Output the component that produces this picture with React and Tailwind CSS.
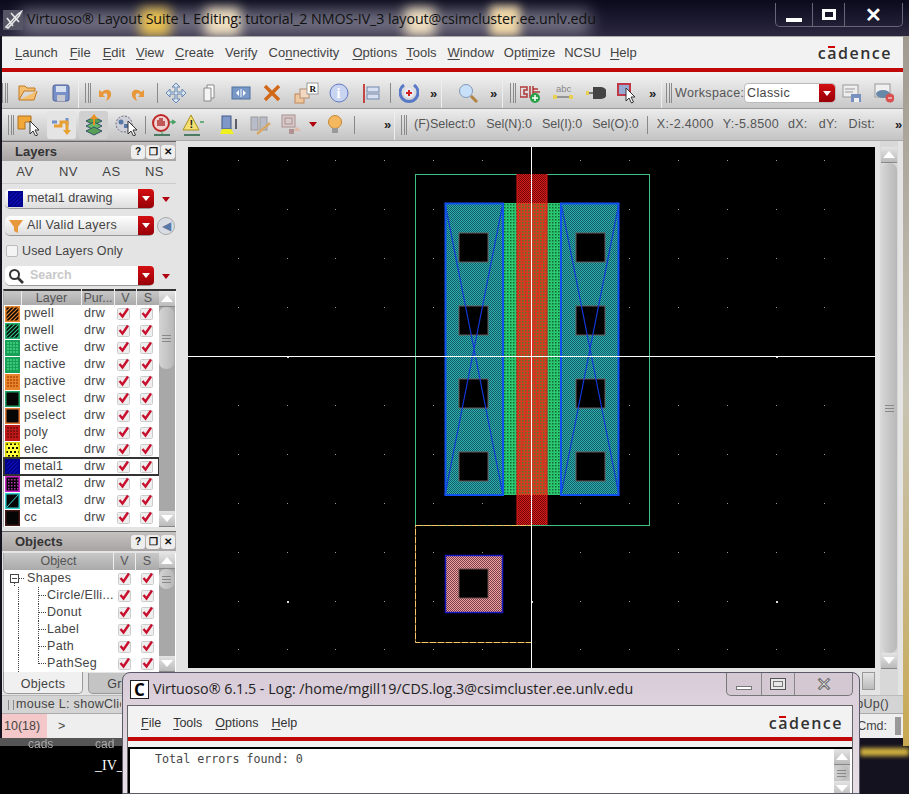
import React from 'react';

const LAYERS = [
  ['pwell', 'hatchOrange'], ['nwell', 'hatchGreen'], ['active', 'dotGreen'], ['nactive', 'dotGreen'],
  ['pactive', 'dotOrange'], ['nselect', 'boxGreen'], ['pselect', 'boxOrange'], ['poly', 'dotRed'],
  ['elec', 'dotYellow'], ['metal1', 'hatchBlue'], ['metal2', 'dotPurple'], ['metal3', 'slashCyan'], ['cc', 'boxDark'],
];
const SWATCH = {
  hatchOrange: ['#e8842c', 'hatch', '#e8842c'], hatchGreen: ['#22b070', 'hatch', '#30c080'],
  dotGreen: ['#18a058', 'check', '#38c878'], dotOrange: ['#e8842c', 'check', '#c05810'],
  boxGreen: ['#1fa060', null], boxOrange: ['#e07838', null], dotRed: ['#c01818', 'check', '#801010'],
  dotYellow: ['#d8d800', 'checkBig', '#ffff40'], hatchBlue: ['#000090', 'hatch', '#1010c0'],
  dotPurple: ['#c828c8', 'checkDark', '#a020a0'], slashCyan: ['#30d0d0', 'slash', '#30d0d0'], boxDark: ['#401818', null],
};

function Swatch({ kind }) {
  const [edge, type, ink] = SWATCH[kind];
  const fill = type === 'check' ? edge : kind === 'dotYellow' ? '#ffff40' : kind === 'hatchBlue' ? '#000080' : '#050505';
  return (
    <svg width="15" height="16" viewBox="0 0 15 16" className="shrink-0">
      <clipPath id={`clip-${kind}`}><rect x="1" y="1" width="13" height="14" /></clipPath>
      <rect x="0.75" y="0.75" width="13.5" height="14.5" fill={fill} />
      <g clipPath={`url(#clip-${kind})`}>
        {type === 'hatch' && [0, 4, 8, 12, 16, 20, 24].map((n) => (
          <line key={n} x1={n - 8} y1="15" x2={n + 6} y2="1" stroke={ink} strokeWidth="1.200" />
        ))}
        {type === 'slash' && <line x1="2" y1="14" x2="13" y2="2" stroke={ink} />}
        {type === 'check' && [2, 5, 8, 11].map((a) => [2, 5, 8, 11].map((b) => (
          <rect key={`${a}${b}`} x={a} y={b} width="2" height="2" fill={ink} />
        )))}
        {type === 'checkBig' && [1, 5, 9, 13].map((a) => [1, 5, 9, 13].map((b) => (
          <rect key={`${a}${b}`} x={a + ((b - 1) % 8 === 0 ? 0 : 2)} y={b} width="2" height="2" fill="#101000" />
        )))}
        {type === 'checkDark' && [3, 6, 9, 12].map((a) => [3, 6, 9, 12].map((b) => (
          <rect key={`${a}${b}`} x={a} y={b} width="1.500" height="1.500" fill="#b030b0" />
        )))}
      </g>
      <rect x="0.75" y="0.75" width="13.5" height="14.5" fill="none" stroke={edge} strokeWidth="1.500" />
    </svg>
  );
}

function Check() {
  return (
    <svg width="13" height="13" viewBox="0 0 13 13" className="shrink-0">
      <rect x="0.5" y="1.5" width="12" height="11" rx="1" fill="#eee" stroke="#ccc" />
      <path d="M2.5 6l3 3.5 5.5-8" fill="none" stroke="#c8102e" strokeWidth="2.4" />
    </svg>
  );
}

function Caret({ className = 'border-t-[#b00010]' }) {
  return <span className={`block w-0 h-0 border-x-[4px] border-x-transparent border-t-[5px] ${className}`} />;
}

function RedDrop() {
  return (
    <span className="w-[16px] self-stretch bg-gradient-to-b from-[#d40f12] to-[#980008] rounded-r-[4px] flex items-center justify-center">
      <Caret className="border-t-white" />
    </span>
  );
}

function Grip() {
  return (
    <span className="w-[6px] h-[20px] shrink-0 flex justify-between">
      <span className="w-px h-full bg-[#8a8a8a]" />
      <span className="w-px h-full bg-[#8a8a8a]" />
      <span className="w-px h-full bg-[#8a8a8a]" />
    </span>
  );
}

function More({ className = '' }) {
  return <span className={`w-[10px] shrink-0 text-[13px] leading-none font-bold text-[#222] ${className}`}>»</span>;
}

function Arrow({ x = 0, y = 0 }) {
  return <path transform={`translate(${x} ${y})`} d="M0 0v13l3-3 2.500 5 2-1-2.500-5h4z" fill="#fff" stroke="#333" strokeWidth="1" />;
}

function Ic({ children, w = 20, className = '' }) {
  return (
    <svg width={w} height="22" viewBox={`0 0 ${w} 22`} className={`shrink-0 ${className}`}>
      {children}
    </svg>
  );
}

function Logo({ className = '' }) {
  return (
    <span className={`font-['Open_Sans',sans-serif] font-semibold text-[16px] leading-none tracking-[1.5px] text-[#333] flex ${className}`}>
      c<span className="relative">a<span className="absolute left-[1px] top-[1px] w-[7px] h-[2px] bg-[#c00]" /></span>dence
    </span>
  );
}

function U({ children }) {
  return <span className="underline underline-offset-2 decoration-1">{children}</span>;
}

function DockHeader({ title }) {
  return (
    <div className="h-[20px] w-[174px] shrink-0 flex items-center bg-gradient-to-b from-[#c6c2c2] to-[#a8a4a4] border-t border-[#666]">
      <span className="ml-[13px] font-bold text-[13px] text-[#333] flex-1">{title}</span>
      {['?', '❐', '✕'].map((g) => (
        <span key={g} className="w-[14px] h-[14px] mr-[1px] rounded-[3px] bg-[#eee] text-[10px] font-bold text-[#111] flex items-center justify-center">{g}</span>
      ))}
    </div>
  );
}

function ScrollBtn({ up }) {
  return (
    <span className="h-[16px] w-[16px] shrink-0 bg-gradient-to-b from-[#e4e4e4] to-[#bbb] border-b border-[#888] flex items-center justify-center">
      <span className={`w-0 h-0 border-x-[6px] border-x-transparent ${up ? 'border-b-[7px] border-b-white' : 'border-t-[7px] border-t-white'}`} />
    </span>
  );
}

function Thumb({ className }) {
  return (
    <span className={`w-[15px] bg-gradient-to-r from-[#d4d4d4] to-[#b8b8b8] rounded-[7px] flex flex-col items-center justify-center gap-[2px] shrink-0 ${className}`}>
      <span className="w-[9px] h-px bg-[#888]" />
      <span className="w-[9px] h-px bg-[#888]" />
      <span className="w-[9px] h-px bg-[#888]" />
    </span>
  );
}

function Canvas() {
  const pitch = 48.9;
  const dots = [];
  for (let i = -7; i <= 7; i++) {
    for (let j = -4; j <= 6; j++) {
      const x = 531 + i * pitch;
      const y = 356 + j * pitch;
      if (x < 190 || x > 873 || y < 149 || y > 666) continue;
      dots.push(<rect key={`${i}_${j}`} x={Math.round(x)} y={Math.round(y)} width={i % 5 === 0 && j % 5 === 0 ? 2 : 1} height={i % 5 === 0 && j % 5 === 0 ? 2 : 1} fill={i % 5 === 0 && j % 5 === 0 ? '#ddd' : '#999'} />);
    }
  }
  const contacts = [233, 306, 379, 452];
  return (
    <svg width="687" height="521" viewBox="188 147 687 521" className="block bg-black">
      <defs>
        <pattern id="teal" width="2" height="2" patternUnits="userSpaceOnUse">
          <rect width="2" height="2" fill="#2cb0a8" /><rect width="1" height="1" fill="#125a6c" /><rect x="1" y="1" width="1" height="1" fill="#125a6c" />
        </pattern>
        <pattern id="green" width="3" height="3" patternUnits="userSpaceOnUse">
          <rect width="3" height="3" fill="#2cc870" /><rect width="1.500" height="1.500" fill="#0e6a3a" />
        </pattern>
        <pattern id="red" width="2" height="2" patternUnits="userSpaceOnUse">
          <rect width="2" height="2" fill="#d81c1c" /><rect width="1" height="1" fill="#700808" /><rect x="1" y="1" width="1" height="1" fill="#700808" />
        </pattern>
        <pattern id="redGreen" width="3" height="3" patternUnits="userSpaceOnUse">
          <rect width="3" height="3" fill="#d83a20" /><rect width="1.500" height="1.500" fill="#4d7a30" />
        </pattern>
        <pattern id="pink" width="2" height="2" patternUnits="userSpaceOnUse">
          <rect width="2" height="2" fill="#f0a0a0" /><rect width="1" height="1" fill="#784048" /><rect x="1" y="1" width="1" height="1" fill="#784048" />
        </pattern>
      </defs>
      {dots}
      <rect x="415.500" y="174.500" width="234" height="351" fill="none" stroke="#3fc080" />
      <rect x="445" y="203" width="58" height="292" fill="url(#teal)" />
      <rect x="561" y="203" width="58" height="292" fill="url(#teal)" />
      <rect x="503" y="203" width="58" height="292" fill="url(#green)" />
      <rect x="517" y="174" width="30" height="29" fill="url(#red)" />
      <rect x="517" y="495" width="30" height="30" fill="url(#red)" />
      <rect x="517" y="203" width="30" height="292" fill="url(#redGreen)" />
      <path d="M517 174v351M547 174v351" stroke="#e01818" strokeWidth="1" />
      <path d="M517 203l30 292M547 203l-30 292" stroke="#f02020" strokeWidth="1" opacity="0.7" />
      {contacts.map((y) => (
        <g key={y}>
          <rect x="459" y={y} width="29" height="29" fill="#000" stroke="#6a5a5a" />
          <rect x="576" y={y} width="29" height="29" fill="#000" stroke="#6a5a5a" />
        </g>
      ))}
      <path d="M445 203l58 292M503 203l-58 292M561 203l58 292M619 203l-58 292" stroke="#1238d8" strokeWidth="1.200" fill="none" />
      <rect x="445.500" y="203.500" width="57.500" height="291.500" fill="none" stroke="#1050f0" strokeWidth="2" />
      <rect x="561" y="203.500" width="57.500" height="291.500" fill="none" stroke="#1050f0" strokeWidth="2" />
      <rect x="415.500" y="525.500" width="116" height="117" fill="none" stroke="#f8c868" strokeDasharray="7 1" />
      <rect x="445.500" y="555.500" width="57" height="57" fill="url(#pink)" stroke="#1818c0" strokeWidth="1.500" />
      <rect x="459" y="569" width="29" height="29" fill="#000" stroke="#6a4a4a" />
      <path d="M188 356.500h687M531.500 147v521" stroke="#fff" strokeWidth="1" />
    </svg>
  );
}

function LayersPanel() {
  return (
    <>
      <DockHeader title="Layers" />
      <div className="h-[23px] w-[174px] shrink-0 flex items-center pl-[1px] border-b border-[#ccc] text-[13px] text-[#444] tracking-[0.5px]">
        <span className="w-[44px] text-center">AV</span>
        <span className="w-[43px] text-center">NV</span>
        <span className="w-[43px] text-center">AS</span>
        <span className="w-[43px] text-center">NS</span>
      </div>
      <div className="mt-[5px] h-[20px] flex items-center">
        <div className="ml-[3px] w-[149px] h-full flex items-center bg-gradient-to-b from-white to-[#ddd] rounded-[5px] border-b border-[#999]">
          <span className="ml-[3px]"><Swatch kind="hatchBlue" /></span>
          <span className="ml-[4px] flex-1 text-[12.5px] tracking-[0.05px] text-[#444]">metal1 drawing</span>
          <RedDrop />
        </div>
        <span className="ml-[8px]"><Caret /></span>
      </div>
      <div className="mt-[7px] h-[20px] flex items-center">
        <div className="ml-[3px] w-[149px] h-full flex items-center bg-gradient-to-b from-white to-[#ddd] rounded-[5px] border-b border-[#999]">
          <svg width="16" height="16" viewBox="0 0 16 16" className="ml-[3px]"><path d="M1 2h14l-5 7v6l-4-2V9z" fill="#e8983c" /></svg>
          <span className="ml-[3px] flex-1 text-[12.5px] tracking-[0.3px] text-[#444]">All Valid Layers</span>
          <RedDrop />
        </div>
        <span className="ml-[3px] w-[18px] h-[18px] rounded-full bg-[#d8dce4] border border-[#aaa] flex items-center justify-center text-[12px] leading-none text-[#5878a8]">◀</span>
      </div>
      <div className="mt-[6px] h-[18px] flex items-center">
        <span className="ml-[4px] w-[12px] h-[12px] bg-[#f4f4f4] border border-[#bbb] rounded-[2px]" />
        <span className="ml-[4px] text-[12.5px] tracking-[0.1px] text-[#444]">Used Layers Only</span>
      </div>
      <div className="mt-[6px] h-[20px] flex items-center">
        <div className="ml-[3px] w-[149px] h-full flex items-center bg-white rounded-[5px] border-b border-[#999]">
          <svg width="16" height="16" viewBox="0 0 16 16" className="ml-[3px]" fill="none" stroke="#333" strokeWidth="2"><circle cx="6.500" cy="6.500" r="4.500" /><path d="M10 10l5 5" strokeWidth="2.600" /></svg>
          <span className="ml-[6px] flex-1 text-[12.5px] font-bold text-[#c8c8c8]">Search</span>
          <RedDrop />
        </div>
        <span className="ml-[8px]"><Caret /></span>
      </div>
      <div className="mt-[3px] h-[238px] w-[173px] ml-[1px] flex border-t-2 border-[#333] border-l border-l-[#aaa] bg-white">
        <div className="w-[155px] flex flex-col">
          <div className="h-[14px] shrink-0 flex items-center text-[12.5px] text-[#555] bg-gradient-to-b from-[#c8c8c8] to-[#aaa]">
            <span className="w-[18px] border-r border-[#eee] h-full" />
            <span className="w-[60px] text-center border-r border-[#eee]">Layer</span>
            <span className="w-[33px] text-center border-r border-[#eee] truncate">Pur...</span>
            <span className="w-[22px] text-center border-r border-[#eee]">V</span>
            <span className="w-[22px] text-center">S</span>
          </div>
          {LAYERS.map(([name, kind]) => (
            <div key={name} className={`h-[17px] shrink-0 flex items-center text-[12.500px] text-[#444] tracking-[0.3px] ${name === 'metal1' ? 'outline-2 -outline-offset-1 outline-[#333]' : ''}`}>
              <span className="ml-[1px]"><Swatch kind={kind} /></span>
              <span className="ml-[4px] w-[60px]">{name}</span>
              <span className="w-[33px]">drw</span>
              <Check />
              <span className="ml-[10px]"><Check /></span>
            </div>
          ))}
        </div>
        <div className="w-[16px] flex flex-col bg-[#a8a8a8]">
          <ScrollBtn up />
          <Thumb className="h-[62px]" />
          <span className="flex-1" />
          <ScrollBtn />
        </div>
      </div>
    </>
  );
}

function TreeGuide({ last }) {
  return (
    <svg width="43" height="17" viewBox="0 0 43 17" className="shrink-0">
      <path d="M14.500 0v17" stroke="#444" strokeDasharray="1 1" />
      <path d={last ? 'M34.500 0v9M35 8.500h7' : 'M34.500 0v17M35 8.500h7'} stroke="#444" strokeDasharray="1 1" />
    </svg>
  );
}

function ObjectsPanel() {
  const kids = ['Circle/Elli...', 'Donut', 'Label', 'Path', 'PathSeg'];
  return (
    <>
      <div className="mt-[4px]"><DockHeader title="Objects" /></div>
      <div className="mt-[2px] h-[119px] w-[173px] ml-[1px] flex border-l border-[#aaa] bg-white overflow-hidden">
        <div className="w-[155px] flex flex-col">
          <div className="h-[17px] shrink-0 flex items-center text-[12.500px] text-[#555] bg-gradient-to-b from-[#c8c8c8] to-[#aaa]">
            <span className="w-[110px] text-center border-r border-[#eee]">Object</span>
            <span className="w-[22px] text-center border-r border-[#eee]">V</span>
            <span className="w-[22px] text-center">S</span>
          </div>
          <div className="h-[17px] shrink-0 flex items-center text-[12.500px] text-[#444] tracking-[0.3px]">
            <svg width="23" height="17" viewBox="0 0 23 17" className="shrink-0">
              <rect x="6.500" y="4.500" width="8" height="8" fill="#fff" stroke="#444" />
              <path d="M8 8.500h5" stroke="#444" />
              <path d="M15 8.500h6M10.500 13v4" stroke="#444" strokeDasharray="1 1" />
            </svg>
            <span className="w-[91px]">Shapes</span>
            <Check />
            <span className="ml-[10px]"><Check /></span>
          </div>
          {kids.map((k, i) => (
            <div key={k} className="h-[17px] shrink-0 flex items-center text-[12.500px] text-[#444] tracking-[0.3px]">
              <TreeGuide last={i === 4} />
              <span className="w-[71px] truncate">{k}</span>
              <Check />
              <span className="ml-[10px]"><Check /></span>
            </div>
          ))}
        </div>
        <div className="w-[16px] flex flex-col bg-[#a8a8a8]">
          <ScrollBtn up />
          <Thumb className="h-[20px]" />
          <span className="flex-1" />
          <ScrollBtn />
        </div>
      </div>
      <div className="h-[22px] flex items-end text-[12.500px] text-[#444] tracking-[0.3px]">
        <span className="ml-[1px] w-[80px] h-full pt-[3px] bg-[#f0f0f0] border border-t-0 border-[#999] rounded-b-[5px] flex items-center justify-center">Objects</span>
        <span className="ml-[5px] w-[70px] h-[21px] pt-[3px] bg-[#c4c4c4] border border-t-0 border-[#999] rounded-b-[5px] flex items-center justify-center">Grids</span>
      </div>
    </>
  );
}

function LogWindow() {
  return (
    <div className="absolute left-[122px] top-[672px] w-[738px] h-[122px] rounded-t-[8px] border border-[#5a5a6a] bg-gradient-to-b from-[#d8ccd8] to-[#e8dfe6] flex flex-col">
      <div className="h-[32px] shrink-0 flex items-start">
        <span className="ml-[7px] mt-[7px] w-[19px] h-[19px] bg-white border border-[#222] flex items-center justify-center font-['Open_Sans',sans-serif] font-bold text-[17px] leading-none text-black">C</span>
        <span className="ml-[4px] mt-[5px] flex-1 font-['Open_Sans',sans-serif] text-[14.250px] leading-[22px] text-[#222]">Virtuoso® 6.1.5 - Log: /home/mgill19/CDS.log.3@csimcluster.ee.unlv.edu</span>
        <div className="h-[23px] w-[127px] mr-[6px] flex border border-t-0 border-[#777] rounded-b-[5px] bg-[#d4c8d2]">
          <span className="w-[35px] border-r border-[#888] flex items-end justify-center pb-[5px]"><span className="w-[16px] h-[4px] bg-white border border-[#777]" /></span>
          <span className="w-[33px] border-r border-[#888] flex items-center justify-center"><span className="w-[16px] h-[12px] border border-[#555] bg-[#e8e8e8] flex items-center justify-center"><span className="w-[10px] h-[6px] border border-[#777]" /></span></span>
          <span className="flex-1 flex items-center justify-center text-[19px] leading-none text-[#f4f4f4] [-webkit-text-stroke:1px_#666]">✕</span>
        </div>
      </div>
      <div className="ml-[4px] mr-[6px] flex-1 flex flex-col border border-[#666] border-b-0 bg-[#f2f2f2] min-h-0">
        <div className="h-[31px] shrink-0 flex items-center pt-[3px] text-[12.500px] text-[#333]">
          <span className="ml-[13px]"><U>F</U>ile</span>
          <span className="ml-[12px]"><U>T</U>ools</span>
          <span className="ml-[13px]"><U>O</U>ptions</span>
          <span className="ml-[13px]"><U>H</U>elp</span>
          <Logo className="ml-auto mr-[9px]" />
        </div>
        <div className="h-[4px] shrink-0 bg-[#c00808]" />
        <div className="h-[6px] shrink-0" />
        <div className="flex-1 flex border-t-2 border-l-2 border-black bg-white min-h-0 overflow-hidden">
          <span className="pl-[25px] pt-[2px] flex-1 font-['DejaVu_Sans_Mono',monospace] text-[11.700px] leading-[16px] text-[#444]">Total errors found: 0</span>
          <div className="w-[16px] mr-[2px] flex flex-col bg-[#c8c8c8]">
            <ScrollBtn up />
            <Thumb className="h-[16px]" />
            <ScrollBtn />
          </div>
        </div>
      </div>
    </div>
  );
}

export default function App() {
  return (
    <div className="relative w-[909px] h-[794px] overflow-hidden bg-[#14121f] font-['Liberation_Sans',sans-serif]">
      {/* desktop wallpaper blur */}
      <div className="absolute left-0 top-0 w-[909px] h-[36px] bg-gradient-to-b from-[#0a0a1c] to-[#2c2840]" />
      <div className="absolute left-[20px] top-[10px] w-[570px] h-[24px] bg-[#aaa8b8] opacity-60 blur-[8px]" />
      <div className="absolute left-[140px] top-[8px] w-[30px] h-[28px] bg-[#e8c050] blur-[6px]" />
      <div className="absolute left-[205px] top-[8px] w-[35px] h-[28px] bg-[#f0e0c0] blur-[6px]" />
      <div className="absolute left-[405px] top-[8px] w-[30px] h-[28px] bg-[#f0e0c0] blur-[6px]" />
      <div className="absolute left-[490px] top-[6px] w-[30px] h-[30px] bg-[#f0d8a8] blur-[5px]" />
      <div className="absolute left-[903px] top-[36px] w-[6px] h-[710px] bg-gradient-to-b from-[#a09a90] via-[#c8c4b4] to-[#c8a850]" />
      <div className="absolute left-[860px] top-[748px] w-[49px] h-[8px] bg-[#d0b040] blur-[2px]" />
      <div className="absolute left-0 top-[738px] w-[122px] h-[8px] bg-[#555]" />
      <div className="absolute left-0 top-[746px] w-[122px] h-[48px] bg-black" />
      <span className="absolute left-[28px] top-[735px] text-[12px] text-[#aaa] blur-[0.5px]">cads</span>
      <span className="absolute left-[95px] top-[735px] text-[12px] text-[#aaa] blur-[0.5px]">cad</span>
      <span className="absolute left-[95px] top-[755px] font-['Liberation_Serif',serif] text-[14px] text-white">_IV_</span>

      <div className="relative flex flex-col h-[738px]">
        {/* title bar */}
        <div className="h-[36px] shrink-0 flex items-start">
          <svg width="20" height="20" viewBox="0 0 20 20" className="ml-[3px] mt-[10px]">
            <rect width="20" height="20" fill="#556" />
            <path d="M3 17L15 4l3-2-2 4L5 18zM4 8l6 8M8 3l8 9" stroke="#e8e8e8" strokeWidth="1.600" fill="none" />
          </svg>
          <span className="ml-[4px] mt-[8px] flex-1 font-['Open_Sans',sans-serif] text-[14.250px] leading-[22px] tracking-[-0.07px] text-[#111]">Virtuoso® Layout Suite L Editing: tutorial_2 NMOS-IV_3 layout@csimcluster.ee.unlv.edu</span>
          <div className="h-[24px] w-[128px] mr-[6px] mt-[3px] flex border border-t-0 border-[#667] rounded-b-[5px]">
            <span className="w-[37px] border-r border-[#667] flex items-end justify-center pb-[4px]"><span className="w-[16px] h-[4px] bg-white" /></span>
            <span className="w-[32px] border-r border-[#667] flex items-center justify-center"><span className="w-[14px] h-[11px] border-[3px] border-white" /></span>
            <span className="flex-1 flex items-center justify-center text-[20px] leading-none font-bold text-white">✕</span>
          </div>
        </div>

        <div className="ml-[2px] w-[901px] flex-1 min-h-0 flex flex-col bg-[#e4e4e4] border-t border-[#aaa] rounded-b-[5px]">
          {/* menu */}
          <div className="h-[31px] shrink-0 flex items-center bg-[#f2f2f2] text-[13px] text-[#444]">
            <span className="ml-[13px]"><U>L</U>aunch</span>
            <span className="ml-[12px]"><U>F</U>ile</span>
            <span className="ml-[12px]"><U>E</U>dit</span>
            <span className="ml-[11px]"><U>V</U>iew</span>
            <span className="ml-[11px]"><U>C</U>reate</span>
            <span className="ml-[11px]">Ver<U>i</U>fy</span>
            <span className="ml-[11px]">Co<U>n</U>nectivity</span>
            <span className="ml-[13px]"><U>O</U>ptions</span>
            <span className="ml-[9px]"><U>T</U>ools</span>
            <span className="ml-[11px]"><U>W</U>indow</span>
            <span className="ml-[10px]">Opti<U>m</U>ize</span>
            <span className="ml-[9px]">NCSU</span>
            <span className="ml-[9px]"><U>H</U>elp</span>
            <Logo className="ml-auto mr-[11px]" />
          </div>
          <div className="h-[4px] shrink-0 bg-[#c00808]" />

          {/* toolbar 1 */}
          <div className="h-[37px] shrink-0 flex items-center pt-[6px] bg-gradient-to-b from-[#f4f4f4] to-[#c8c8c8] border-b border-[#999]">
            <div className="w-[77px] h-full flex items-center border-r border-[#eee]">
              <Grip />
              <Ic className="ml-[10px]"><path d="M1 18V4h6l2 2h8v3H6l-5 9h15l3-9" fill="#f4c070" stroke="#c07820" /></Ic>
              <Ic className="ml-[13px]"><rect x="2" y="3" width="16" height="16" rx="2" fill="#7890c8" stroke="#506098" /><rect x="5" y="4" width="10" height="6" fill="#d8e0f0" /><rect x="6" y="13" width="8" height="6" fill="#c8c8d0" /></Ic>
            </div>
            <div className="w-[363px] h-full flex items-center border-r border-[#eee]">
              <span className="ml-[6px]"><Grip /></span>
              <Ic className="ml-[5px]"><path d="M6 10c4-4 10-2 9 3 0 3-3 5-5 6 1-3 2-5 1-7-1-1-3-1-4 1l2 2H3V8z" fill="#e89838" /></Ic>
              <Ic className="ml-[11px]"><path d="M14 10c-4-4-10-2-9 3 0 3 3 5 5 6-1-3-2-5-1-7 1-1 3-1 4 1l-2 2h6V8z" fill="#e89838" /></Ic>
              <span className="ml-[10px] w-px h-[20px] bg-[#888]" />
              <Ic className="ml-[8px]"><path d="M10 1l4 4h-3v5h5V7l4 4-4 4v-3h-5v5h3l-4 4-4-4h3v-5H4v3l-4-4 4-4v3h5V5H6z" fill="#d8e4f0" stroke="#6888b0" /></Ic>
              <Ic className="ml-[13px]"><path d="M8 3h7v13H8z" fill="#fff" stroke="#888" /><path d="M5 6h7v13H5z" fill="#f4f4f4" stroke="#888" /></Ic>
              <Ic className="ml-[12px]"><rect x="1" y="5" width="18" height="12" fill="#7898c8" stroke="#5070a0" /><path d="M10 7v8" stroke="#fff" /><path d="M5 11l3-3v6zM15 11l-3-3v6z" fill="#fff" /></Ic>
              <Ic className="ml-[11px]"><path d="M3 4l14 14M17 4L3 18" stroke="#d06818" strokeWidth="3.400" /></Ic>
              <Ic w={26} className="ml-[11px]"><rect x="2" y="12" width="9" height="9" fill="#f0c8a0" stroke="#c08858" /><rect x="7" y="7" width="9" height="9" fill="#f4d8c0" stroke="#b09078" /><rect x="14" y="1" width="11" height="11" fill="#fff" stroke="#999" /><text x="16.500" y="10" fontSize="9" fontWeight="700" fontFamily="Liberation Serif" fill="#111">R</text></Ic>
              <Ic className="ml-[10px]"><circle cx="10" cy="11" r="9" fill="#c8d4f0" stroke="#6078c0" /><text x="7.500" y="16" fontSize="14" fontWeight="700" fontFamily="Liberation Serif" fill="#fff">i</text></Ic>
              <Ic className="ml-[12px]"><path d="M3 2v19" stroke="#c02020" strokeWidth="1.600" /><rect x="6" y="5" width="12" height="5" fill="#d8e0f0" stroke="#7088b0" /><rect x="6" y="12" width="12" height="5" fill="#d8e0f0" stroke="#7088b0" /></Ic>
              <span className="ml-[9px] w-px h-[20px] bg-[#888]" />
              <Ic className="ml-[8px]"><path d="M5 3a9 9 0 1 0 10 0" fill="none" stroke="#5878c8" strokeWidth="3" /><circle cx="10" cy="11" r="5" fill="#e8eaf8" /><path d="M10 8v6M7 11h6" stroke="#d02020" strokeWidth="2" /></Ic>
              <More className="ml-[11px]" />
            </div>
            <div className="w-[61px] h-full flex items-center border-r border-[#eee]">
              <Ic className="ml-[16px]"><circle cx="8" cy="9" r="6.500" fill="#c8e0f8" stroke="#8098b8" /><path d="M13 14l6 6" stroke="#b08040" strokeWidth="3" /></Ic>
              <More className="ml-[12px]" />
            </div>
            <div className="w-[159px] h-full flex items-center border-r border-[#eee]">
              <span className="ml-[7px]"><Grip /></span>
              <Ic className="ml-[4px]"><path d="M0 5h7v3H4v4h3v3H0zM18 7h-5v1M10 4v12M13 4v12M13 10h7" fill="none" stroke="#b03838" strokeWidth="1.500" /><circle cx="15" cy="16" r="5" fill="#28a048" /><path d="M15 13v6M12 16h6" stroke="#fff" strokeWidth="1.500" /></Ic>
              <Ic className="ml-[13px]"><text x="3" y="10" fontSize="9.500" fontFamily="Liberation Sans" fill="#888">abc</text><path d="M2 15h16" stroke="#555" /><rect x="0" y="13" width="4" height="4" fill="#e8d050" /><rect x="16" y="13" width="4" height="4" fill="#e8d050" /></Ic>
              <Ic className="ml-[13px]"><path d="M0 11h8" stroke="#777" strokeWidth="2" /><rect x="0" y="9" width="3" height="4" fill="#e8d050" /><path d="M7 5h8a6 6 0 0 1 0 12H7z" fill="#444" /></Ic>
              <Ic className="ml-[11px]"><rect x="1" y="2" width="12" height="11" fill="#98a8d0" stroke="#c03848" strokeWidth="2" /><Arrow x={9} y={6} /></Ic>
              <More className="ml-[12px]" />
            </div>
            <div className="flex-1 h-full flex items-center">
              <span className="ml-[4px]"><Grip /></span>
              <span className="ml-[3px] w-[63px] text-[12.500px] text-[#555] tracking-[0.35px]">Workspace:</span>
              <div className="ml-[6px] w-[92px] h-[20px] flex items-center bg-white rounded-[4px] border border-[#bbb]">
                <span className="ml-[2px] flex-1 text-[12.500px] text-[#444] tracking-[0.4px]">Classic</span>
                <RedDrop />
              </div>
              <Ic className="ml-[6px]"><rect x="1" y="3" width="15" height="12" fill="#eee" stroke="#999" /><path d="M3 7h10M3 10h8" stroke="#999" /><rect x="9" y="12" width="10" height="8" fill="#7890c0" /><rect x="12" y="16" width="5" height="4" fill="#eee" /></Ic>
              <Ic className="ml-[12px]"><rect x="1" y="2" width="15" height="13" fill="#f0f0f0" stroke="#999" /><ellipse cx="9" cy="12" rx="7" ry="4" fill="#6888a8" /><circle cx="16" cy="16" r="4.500" fill="#d85050" /><path d="M14 16h4" stroke="#fff" /></Ic>
            </div>
          </div>

          {/* toolbar 2 */}
          <div className="h-[32px] shrink-0 flex items-center bg-gradient-to-b from-[#ececec] to-[#c4c4c4] border-b border-[#aaa]">
            <div className="w-[395px] h-full flex items-center border-r border-[#eee]">
              <span className="ml-[6px]"><Grip /></span>
              <Ic w={24} className="ml-[3px]"><path d="M1 2h13v6H8v7H1z" fill="#f0a838" stroke="#b07020" /><Arrow x={13} y={7} /></Ic>
              <span className="ml-[6px] w-[29px] h-[28px] rounded-[3px] bg-[#e4e4e4] flex items-center justify-center">
                <Ic w={24}><path d="M2 8h5M17 4v7" stroke="#7090c8" strokeWidth="3" /><path d="M4 12h7v-4h6v9" fill="none" stroke="#e8a030" strokeWidth="3" /><path d="M13 16h8l-4 5z" fill="#e8a030" /></Ic>
              </span>
              <span className="ml-[3px] w-[29px] h-[28px] rounded-[3px] bg-[#d0d0d0] flex items-center justify-center">
                <Ic w={24}><path d="M4 7l8-4 8 4-8 4z" fill="#58a058" stroke="#356" /><path d="M4 12l8-4 8 4-8 4z" fill="#68b868" stroke="#356" /><path d="M4 17l8-4 8 4-8 4z" fill="#58a058" stroke="#356" /><path d="M12 0l4 5h-3v6h-2V5H8z" fill="#e89020" /></Ic>
              </span>
              <Ic w={24} className="ml-[7px]"><circle cx="9" cy="10" r="8" fill="#d0d0d8" stroke="#667" strokeDasharray="2 1.500" /><circle cx="6" cy="8" r="2.500" fill="#5878a8" /><rect x="9" y="10" width="4" height="4" fill="#5878a8" /><Arrow x={13} y={7} /></Ic>
              <span className="ml-[6px] w-px h-[18px] bg-[#888]" />
              <Ic w={24} className="ml-[6px]"><circle cx="9" cy="9" r="8" fill="#f0d0d0" stroke="#c02828" strokeWidth="2" /><path d="M6 12V6M8 12V4M10 12V4M12 12V7" stroke="#c05858" strokeWidth="2" /><path d="M17 8h5M20 6l3 2-3 2" stroke="#40a060" strokeWidth="1.500" fill="none" /><path d="M2 21h16" stroke="#206040" strokeWidth="1.500" /><path d="M10 17v3" stroke="#40a060" /></Ic>
              <Ic w={24} className="ml-[6px]"><path d="M9 1l8 15H1z" fill="#f4e070" stroke="#a89020" /><text x="7.500" y="14" fontSize="11" fontWeight="700" fontFamily="Liberation Sans" fill="#222">!</text><path d="M18 8h4" stroke="#40a060" strokeWidth="1.500" /><path d="M2 21h16" stroke="#206040" strokeWidth="1.500" /></Ic>
              <Ic className="ml-[11px]"><rect x="5" y="2" width="9" height="13" fill="#8098c8" stroke="#405888" /><path d="M3 20l2-5h9l3 5z" fill="#f0f020" /><path d="M19 5v10" stroke="#334" strokeWidth="1.500" /></Ic>
              <Ic w={24} className="ml-[12px]"><rect x="2" y="3" width="7" height="13" fill="#b8bcc8" stroke="#999" /><rect x="11" y="3" width="7" height="13" fill="#b8bcc8" stroke="#999" /><path d="M8 20l13-11" stroke="#d8a868" strokeWidth="2.400" /></Ic>
              <Ic w={24} className="ml-[8px]"><rect x="1" y="1" width="13" height="12" fill="#d8c8c8" stroke="#a89090" /><rect x="4" y="4" width="7" height="6" fill="none" stroke="#a89090" /><path d="M16 13l4 4h-8z" fill="#e0b8a8" /><rect x="8" y="15" width="5" height="5" fill="#b09090" /></Ic>
              <span className="ml-[4px]"><Caret /></span>
              <Ic className="ml-[8px]"><circle cx="10" cy="8" r="6.500" fill="#f4b860" stroke="#c88830" /><rect x="7" y="14" width="6" height="5" fill="#999" /></Ic>
              <span className="ml-[9px] w-px h-[18px] bg-[#888]" />
              <More className="ml-[29px]" />
            </div>
            <div className="flex-1 h-full flex items-center text-[12.500px] text-[#555]">
              <span className="ml-[6px]"><Grip /></span>
              <span className="ml-[7px]">(F)Select:0</span>
              <span className="ml-[11px]">Sel(N):0</span>
              <span className="ml-[10px]">Sel(I):0</span>
              <span className="ml-[10px]">Sel(O):0</span>
              <span className="ml-[8px] w-px h-[18px] bg-[#888]" />
              <span className="ml-[9px] tracking-[0.3px]">X:-2.4000</span>
              <span className="ml-[9px] tracking-[0.3px]">Y:-5.8500</span>
              <span className="ml-[9px] tracking-[0.3px]">dX:</span>
              <span className="ml-[11px] tracking-[0.3px]">dY:</span>
              <span className="ml-[11px] tracking-[0.3px]">Dist:</span>
              <More className="ml-[20px]" />
            </div>
          </div>

          {/* dock + canvas */}
          <div className="flex-1 min-h-0 flex">
            <div className="w-[178px] shrink-0 flex flex-col">
              <LayersPanel />
              <ObjectsPanel />
            </div>
            <div className="w-[8px] shrink-0" />
            <div className="flex flex-col pt-[6px]">
              <Canvas />
              <div className="h-[18px] mt-[4px] flex justify-end">
                <span className="w-[13px] h-full bg-gradient-to-b from-[#e4e4e4] to-[#bbb] border border-[#999]" />
              </div>
            </div>
            <div className="ml-[5px] w-[18px] flex flex-col items-center pt-[6px] pb-[26px] bg-[#d8d8d8]">
              <ScrollBtn up />
              <Thumb className="flex-1" />
              <ScrollBtn />
            </div>
          </div>

          {/* status rows */}
          <div className="h-[18px] shrink-0 flex items-center bg-[#d4d4d4] border-t border-[#bbb] text-[12.500px] text-[#444] tracking-[0.3px]">
            <span className="ml-[6px] w-[6px] h-[10px] border-x border-[#888]" />
            <span className="ml-[2px] w-[105px] overflow-hidden whitespace-nowrap">mouse L: showClickInfo()</span>
            <span className="ml-auto mr-[14px]">pUp()</span>
          </div>
          <div className="h-[25px] shrink-0 flex items-center bg-[#eeeeee] border-t border-[#aaa] text-[12.500px] text-[#444]">
            <span className="w-[45px] h-full bg-[#f4c8c8] flex items-center pl-[2px]">10(18)</span>
            <span className="ml-[11px]">&gt;</span>
            <span className="ml-auto">Cmd:</span>
            <span className="ml-[8px] mr-[2px] w-[6px] h-[18px] bg-[#999]" />
          </div>
        </div>
      </div>

      <LogWindow />
    </div>
  );
}
